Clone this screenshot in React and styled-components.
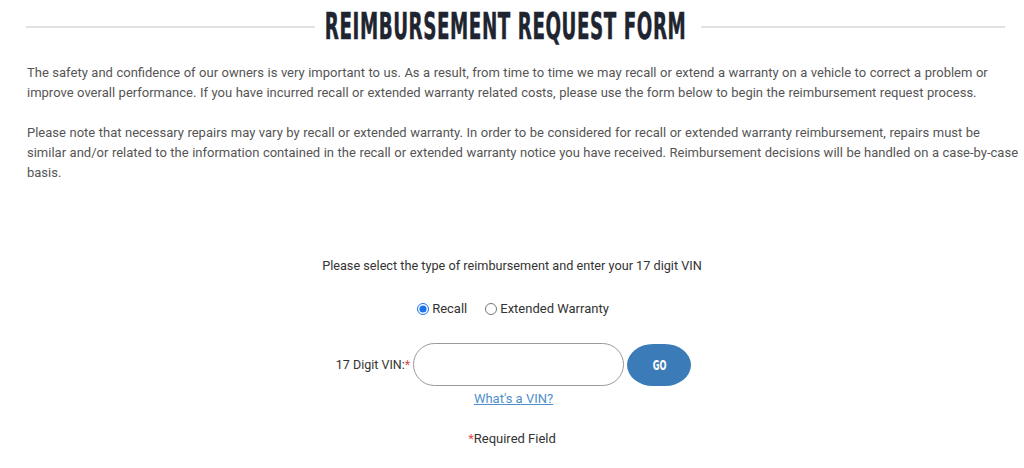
import React, { useState } from 'react'
import styled, { createGlobalStyle } from 'styled-components'

const GlobalStyle = createGlobalStyle`
	body {
		margin: 0;
		background: #fff;
		font-family: Roboto, "Liberation Sans", Arial, sans-serif;
	}
`

export default function App() {
	const [type, setType] = useState('recall')
	const types = [
		{ id: 'recall', label: 'Recall' },
		{ id: 'extended', label: 'Extended Warranty' }
	]

	return (
		<Wrapper>
			<GlobalStyle />
			<TitleRow>
				<Line $grow={289} />
				<Title><Condensed>Reimbursement Request Form</Condensed></Title>
				<Line $grow={304} />
			</TitleRow>

			<Intro>
				<p>
					The safety and confidence of our owners is very important to us. As a result, from time to time we may recall or extend a warranty on a vehicle to correct a problem or improve overall performance. If you have incurred recall or extended warranty related costs, please use the form below to begin the reimbursement request process.
				</p>
				<p>
					Please note that necessary repairs may vary by recall or extended warranty. In order to be considered for recall or extended warranty reimbursement, repairs must be similar and/or related to the information contained in the recall or extended warranty notice you have received. Reimbursement decisions will be handled on a <NoBreak>case-by-case</NoBreak> basis.
				</p>
			</Intro>

			<Form onSubmit={(e) => e.preventDefault()}>
				<Lead>Please select the type of reimbursement and enter your 17 digit VIN</Lead>

				<RadioGroup>
					{types.map((t) => (
						<RadioLabel key={t.id}>
							<input
								type="radio"
								name="reimbursement_type"
								checked={type === t.id}
								onChange={() => setType(t.id)}
							/>
							{t.label}
						</RadioLabel>
					))}
				</RadioGroup>

				<VinRow>
					<VinLabel htmlFor="vin">17 Digit VIN:<Star>*</Star></VinLabel>
					<VinInput id="vin" type="text" />
					<GoButton type="submit"><GoText>GO</GoText></GoButton>
				</VinRow>

				<HelpLink href="#">What's a VIN?</HelpLink>

				<Required><Star>*</Star>Required Field</Required>
			</Form>
		</Wrapper>
	)
}

const Wrapper = styled.div`
	width: 100%;
	padding: 8px 13px 0;
	box-sizing: border-box;
	overflow: hidden;
`

const TitleRow = styled.div`
	display: flex;
	align-items: center;
	height: 38px;
	margin: 0 6px 0 13px;
`

const Line = styled.div`
	flex: ${(p) => p.$grow} 1 0;
	height: 2px;
	background-color: #e2e2e2;
`

const Title = styled.h1`
	flex: none;
	display: flex;
	justify-content: center;
	width: 381px;
	padding-right: 5px;
	margin: 0;
`

const Condensed = styled.span`
	display: inline-block;
	font-family: "DejaVu Sans Condensed", "DejaVu Sans", sans-serif;
	font-stretch: condensed;
	font-weight: 700;
	font-size: 37px;
	line-height: 38px;
	letter-spacing: 1px;
	text-transform: uppercase;
	color: #1f2530;
	white-space: nowrap;
	-webkit-text-stroke: 0.5px #1f2530;
	transform: scaleX(0.55);
	transform-origin: center;
`

const Intro = styled.div`
	padding: 17px 0 0 14px;
	margin-right: -11px;
	p {
		margin: 0 0 20px;
		font-family: Roboto, "Liberation Sans", Arial, sans-serif;
		font-size: 13px;
		line-height: 20px;
		word-spacing: 0.3px;
		color: #555;
	}
`

const NoBreak = styled.span`
	white-space: nowrap;
`

const Form = styled.form`
	display: flex;
	flex-direction: column;
	align-items: center;
	padding-top: 53px;
`

const Lead = styled.p`
	margin: 0;
	font-size: 12.7px;
	line-height: 20px;
	color: #333;
`

const RadioGroup = styled.div`
	display: flex;
	gap: 18px;
	margin-top: 23px;
	margin-left: 2px;
`

const RadioLabel = styled.label`
	display: flex;
	align-items: center;
	gap: 3px;
	cursor: pointer;
	font-size: 13px;
	line-height: 20px;
	color: #333;
	input {
		margin: 0;
		width: 12px;
		height: 12px;
		accent-color: #1a73e8;
	}
`

const VinRow = styled.div`
	display: flex;
	align-items: center;
	margin-top: 24px;
	margin-left: 3px;
`

const VinLabel = styled.label`
	font-size: 12.5px;
	color: #333;
	margin-right: 3px;
`

const Star = styled.span`
	color: #e0474c;
`

const VinInput = styled.input`
	width: 211px;
	height: 43px;
	box-sizing: border-box;
	border: 1px solid #9a9a9a;
	border-radius: 22px;
	padding: 0 16px;
	font-size: 13px;
	outline: none;
`

const GoButton = styled.button`
	display: flex;
	align-items: center;
	justify-content: center;
	margin-left: 3px;
	width: 64px;
	height: 42px;
	border: none;
	border-radius: 26px / 21px;
	background-color: #3a7bb8;
	cursor: pointer;
`

const GoText = styled.span`
	display: inline-block;
	font-family: "DejaVu Sans Condensed", "DejaVu Sans", sans-serif;
	font-stretch: condensed;
	font-weight: 700;
	font-size: 14px;
	color: #fff;
	transform: scaleX(0.65);
`

const HelpLink = styled.a`
	margin-top: 3px;
	margin-left: 3px;
	font-size: 13px;
	line-height: 20px;
	color: #4f8fca;
	text-decoration: underline;
`

const Required = styled.p`
	margin: 20px 0 0;
	font-size: 13px;
	line-height: 20px;
	color: #333;
`
